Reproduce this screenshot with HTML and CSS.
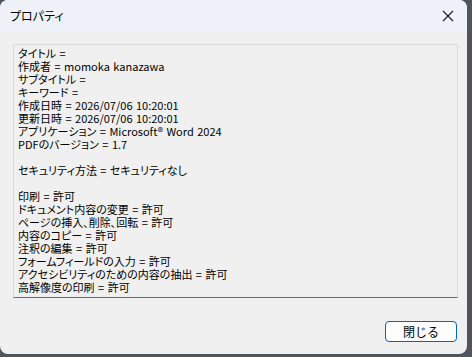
FILE: index.html
```html
<!DOCTYPE html>
<html>
	<head>
		<meta charset="utf-8" />
		<title>プロパティ</title>
		<link rel="stylesheet" href="styles.css">
	</head>
	<body>
		<div id="dialog">
			<div id="titlebar">
				<span class="caption">プロパティ</span>
				<svg class="close" width="12" height="12" viewBox="0 0 12 12"><path d="M1 1L11 11M11 1L1 11" stroke="#1a1a1a" stroke-width="1.1" fill="none"/></svg>
			</div>
			<div id="body">
				<div id="info">
					<div>タイトル = </div>
					<div>作成者 = momoka kanazawa</div>
					<div>サブタイトル = </div>
					<div>キーワード = </div>
					<div>作成日時 = 2026/07/06 10:20:01</div>
					<div>更新日時 = 2026/07/06 10:20:01</div>
					<div>アプリケーション = Microsoft® Word 2024</div>
					<div>PDFのバージョン = 1.7</div>
					<div class="blank"></div>
					<div>セキュリティ方法 = セキュリティなし</div>
					<div class="blank"></div>
					<div>印刷 = 許可</div>
					<div>ドキュメント内容の変更 = 許可</div>
					<div>ページの挿入、削除、回転 = 許可</div>
					<div>内容のコピー = 許可</div>
					<div>注釈の編集 = 許可</div>
					<div>フォームフィールドの入力 = 許可</div>
					<div>アクセシビリティのための内容の抽出 = 許可</div>
					<div>高解像度の印刷 = 許可</div>
				</div>
				<div class="buttons"><button type="button">閉じる</button></div>
			</div>
		</div>
	</body>
</html>
```

FILE: styles.css
```css
*{margin:0;padding:0;box-sizing:border-box}
body{background:#50545c;font-family:"Noto Sans CJK JP","Noto Sans",sans-serif;font-size:11px;color:#000;
	 font-feature-settings:"palt";}
#dialog{width:467px;height:354px;background:#f0f0f0;border-radius:8px;overflow:hidden;
		display:flex;flex-direction:column;}
#titlebar{height:31px;background:#eef2f8;display:flex;align-items:center;justify-content:space-between;
		  padding:0 13px 0 10px;}
#titlebar .caption{font-size:12px;line-height:1;}
#body{flex:1;padding:13px 9px 0 13px;display:flex;flex-direction:column;}
#info{height:254px;border:1px solid #dadada;border-bottom-color:#6d6d6d;padding:2px 4px;
	  line-height:13px;word-spacing:1px;}
#info .blank{height:13px;}
.buttons{display:flex;justify-content:flex-end;padding-top:23px;padding-right:1px;}
.buttons button{width:72px;height:21px;background:#fdfdfd;border:1px solid #0067c0;border-radius:4px;
			   font-family:inherit;font-size:12px;color:#000;line-height:1;}
```
